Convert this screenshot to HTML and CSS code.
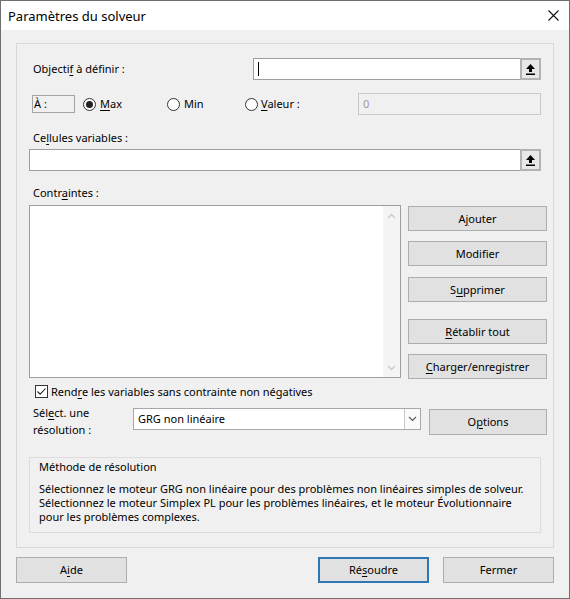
FILE: index.html
```html
<!DOCTYPE html>
<html lang="fr">
<head>
<meta charset="utf-8">
<title>Paramètres du solveur</title>
<link rel="stylesheet" href="styles.css">
</head>
<body>
<div class="window">
  <div class="titlebar">
    <span class="title">Paramètres du solveur</span>
    <svg class="close" width="11" height="11" viewBox="0 0 11 11"><path d="M0.5 0.5 L10.5 10.5 M10.5 0.5 L0.5 10.5" stroke="#111" stroke-width="1.1" fill="none"/></svg>
  </div>
  <div class="client">
    <div class="panel">
      <div class="row row-obj">
        <span class="lbl">Objecti<u>f</u> à définir :</span>
        <div class="refinput w-obj">
          <span class="caret"></span>
          <span class="refbtn"><svg width="9" height="11" viewBox="0 0 9 11"><polygon points="4.5,0 9,5 6,5 6,8 3,8 3,5 0,5" fill="#000"/><rect x="0" y="9.5" width="9" height="1.5" fill="#000"/></svg></span>
        </div>
      </div>
      <div class="row row-to">
        <span class="tobox">À :</span>
        <span class="radio r-max"><span class="circle on"></span><span><u>M</u>ax</span></span>
        <span class="radio r-min"><span class="circle"></span><span>Min</span></span>
        <span class="radio r-val"><span class="circle"></span><span><u>V</u>aleur :</span></span>
        <div class="valinput">0</div>
      </div>
      <div class="lbl lbl-cells">Ce<u>l</u>lules variables :</div>
      <div class="refinput w-full">
        <span class="refbtn"><svg width="9" height="11" viewBox="0 0 9 11"><polygon points="4.5,0 9,5 6,5 6,8 3,8 3,5 0,5" fill="#000"/><rect x="0" y="9.5" width="9" height="1.5" fill="#000"/></svg></span>
      </div>
      <div class="lbl lbl-cons">Contr<u>a</u>intes :</div>
      <div class="cons">
        <div class="listbox">
          <div class="listarea"></div>
          <div class="vscroll">
            <svg width="9" height="6" viewBox="0 0 9 6"><path d="M1 5 L4.5 1.5 L8 5" stroke="#c4c4c4" stroke-width="1.2" fill="none"/></svg>
            <svg width="9" height="6" viewBox="0 0 9 6"><path d="M1 1 L4.5 4.5 L8 1" stroke="#c4c4c4" stroke-width="1.2" fill="none"/></svg>
          </div>
        </div>
        <div class="btncol">
          <div class="btn b-add">A<u>j</u>outer</div>
          <div class="btn b-mod">Modifier</div>
          <div class="btn b-del">S<u>u</u>pprimer</div>
          <div class="btn b-reset"><u>R</u>établir tout</div>
          <div class="btn b-load"><u>C</u>harger/enregistrer</div>
        </div>
      </div>
      <div class="checkrow">
        <span class="checkbox"><svg width="11" height="11" viewBox="0 0 11 11"><path d="M1.5 5.5 L4.2 8.2 L9.5 2.5" stroke="#222" stroke-width="1.1" fill="none"/></svg></span>
        <span>Rend<u>r</u>e les variables sans contrainte non négatives</span>
      </div>
      <div class="selrow">
        <span class="sellbl">Sél<u>e</u>ct. une<br>résolution :</span>
        <div class="select">
          <span class="seltext">GRG non linéaire</span>
          <span class="selarrow"><svg width="9" height="6" viewBox="0 0 9 6"><path d="M1 1 L4.5 4.5 L8 1" stroke="#555" stroke-width="1.1" fill="none"/></svg></span>
        </div>
        <div class="btn b-opt">O<u>p</u>tions</div>
      </div>
      <div class="group">
        <div class="gtitle">Méthode de résolution</div>
        <p class="gtext">Sélectionnez le moteur GRG non linéaire pour des problèmes non linéaires simples de solveur.<br>Sélectionnez le moteur Simplex PL pour les problèmes linéaires, et le moteur Évolutionnaire<br>pour les problèmes complexes.</p>
      </div>
    </div>
    <div class="footer">
      <div class="btn b-help">A<u>i</u>de</div>
      <div class="btn b-solve default">Ré<u>s</u>oudre</div>
      <div class="btn b-close">Fermer</div>
    </div>
  </div>
</div>
</body>
</html>
```

FILE: styles.css
```css
* { box-sizing: border-box; }
html, body { margin: 0; padding: 0; background: #f0f0f0; }
body {
  font-family: "Noto Sans", "Open Sans", sans-serif;
  font-size: 11px;
  line-height: 16px;
  color: #000;
}
u { text-decoration: underline; text-underline-offset: 2px; text-decoration-thickness: 1px; }

.window {
  width: 570px;
  height: 599px;
  border: 1px solid #6f6f6f;
  background: #f0f0f0;
  display: flex;
  flex-direction: column;
  overflow: hidden;
}
.titlebar {
  height: 29px;
  background: #fff;
  display: flex;
  align-items: center;
  padding: 0 10px 0 7px;
  flex-shrink: 0;
}
.title { font-size: 13px; flex: 1; }
.close { display: block; margin-top: 0; margin-right: 0; }

.client { flex: 1; display: flex; flex-direction: column; }
.panel {
  margin: 13px 15px 0 15px;
  height: 505px;
  border: 1px solid #d8d8d8;
  padding: 0 12px;
  display: flex;
  flex-direction: column;
}
.row { display: flex; align-items: center; height: 22px; }
.lbl { padding-left: 4px; }
.row-obj { margin-top: 14px; justify-content: space-between; }

.refinput {
  height: 22px;
  border: 1px solid #9e9e9e;
  background: #fff;
  display: flex;
  align-items: center;
}
.w-obj { width: 288px; }
.w-full { width: 512px; margin-top: 3px; }
.caret { width: 1px; height: 14px; background: #000; margin-left: 4px; }
.refbtn {
  margin: -1px -1px -1px auto;
  width: 21px;
  height: 22px;
  border: 2px solid #b3b3b3;
  background: #e8e8e8;
  display: flex;
  align-items: center;
  justify-content: center;
}
.refbtn svg { display: block; }

.row-to { margin-top: 13px; }
.tobox {
  margin-left: 3px;
  width: 43px;
  height: 18px;
  border: 1px solid #a3a3a3;
  padding-left: 1px;
  line-height: 16px;
}
.radio { display: flex; align-items: center; gap: 4px; }
.r-max { margin-left: 8px; width: 84px; }
.r-min { width: 78px; }
.r-val { gap: 3px; }
.circle {
  width: 13px;
  height: 13px;
  border: 1px solid #333;
  border-radius: 50%;
  background: #fff;
  display: flex;
  align-items: center;
  justify-content: center;
  flex-shrink: 0;
}
.circle.on::after {
  content: "";
  width: 7px;
  height: 7px;
  border-radius: 50%;
  background: #222;
}
.valinput {
  margin-left: auto;
  width: 183px;
  height: 22px;
  border: 1px solid #c9c9c9;
  background: #f0f0f0;
  color: #9a9a9a;
  padding-left: 4px;
  line-height: 20px;
}

.lbl-cells { margin-top: 15px; }
.lbl-cons { margin-top: 14px; }

.cons { display: flex; margin-top: 4px; }
.listbox {
  width: 372px;
  height: 173px;
  border: 1px solid #9e9e9e;
  background: #fff;
  display: flex;
  flex-shrink: 0;
}
.listarea { flex: 1; }
.vscroll {
  width: 17px;
  background: #f4f4f4;
  display: flex;
  flex-direction: column;
  justify-content: space-between;
  align-items: center;
  padding: 7px 0 6px;
}
.vscroll svg { display: block; }
.btncol { margin-left: 7px; width: 139px; flex-shrink: 0; display: flex; flex-direction: column; }

.btn {
  height: 25px;
  background: #e1e1e1;
  border: 1px solid #adadad;
  display: flex;
  align-items: center;
  justify-content: center;
  flex-shrink: 0;
}
.b-add { margin-top: 1px; }
.b-mod { margin-top: 10px; }
.b-del { margin-top: 11px; }
.b-reset { margin-top: 17px; }
.b-load { margin-top: 10px; }

.checkrow { display: flex; align-items: center; height: 17px; margin-top: 4px; }
.checkbox {
  width: 13px;
  height: 13px;
  border: 1px solid #333;
  background: #fff;
  margin-left: 6px;
  margin-right: 3px;
  display: flex;
  align-items: center;
  justify-content: center;
}
.checkbox svg { display: block; }

.selrow { display: flex; align-items: flex-start; height: 30px; margin-top: 8px; }
.sellbl { width: 104px; flex-shrink: 0; padding-left: 4px; line-height: 17px; margin-top: -4px; }
.select {
  width: 288px;
  flex-shrink: 0;
  height: 22px;
  border: 1px solid #a8a8a8;
  background: #fff;
  display: flex;
  align-items: center;
}
.seltext { flex: 1; padding-left: 4px; }
.selarrow {
  width: 16px;
  height: 20px;
  border-left: 1px solid #c8c8c8;
  background: #fafafa;
  display: flex;
  align-items: center;
  justify-content: center;
}
.b-opt { margin-left: 8px; margin-top: 1px; width: 118px; height: 26px; }

.group {
  margin-top: 19px;
  height: 76px;
  border: 1px solid #dcdcdc;
  padding: 2px 9px 0;
}
.gtitle { line-height: 14px; }
.gtext { margin: 8px 0 0; line-height: 14px; }

.footer {
  display: flex;
  margin-top: 9px;
  padding: 0 15px;
}
.b-help { width: 111px; height: 26px; }
.b-solve { margin-left: auto; width: 111px; height: 26px; }
.b-close { margin-left: 14px; width: 111px; height: 26px; }
.btn.default { border: 2px solid #2e77b3; }
```
